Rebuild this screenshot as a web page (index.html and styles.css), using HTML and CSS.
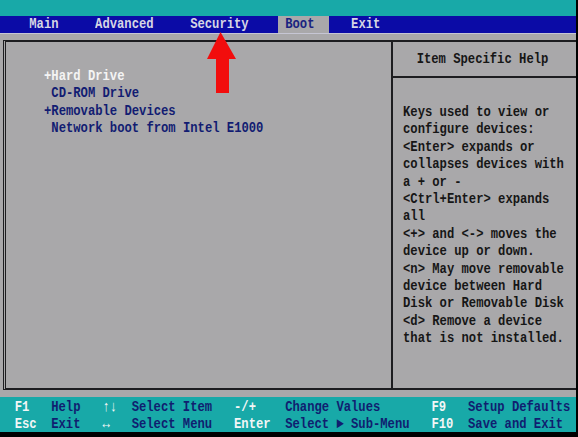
FILE: index.html
```html
<!DOCTYPE html>
<html lang="en">
<head>
    <meta charset="UTF-8">
    <title>BIOS Setup Utility - Boot</title>
    <link rel="stylesheet" href="styles.css">
</head>
<body>
    <div class="screen">
        <div class="topbar"></div>
        <!--menu bar-->
        <nav class="menu">
            <span class="tab"><span class="txt">Main</span></span>
            <span class="tab"><span class="txt">Advanced</span></span>
            <span class="tab"><span class="txt">Security</span></span>
            <span class="tab tab-active"><span class="txt">Boot</span></span>
            <span class="tab"><span class="txt">Exit</span></span>
        </nav>
        <main class="body">
            <div class="panel">
                <section class="boot-list">
                    <p class="boot-item boot-sel">+Hard Drive</p>
                    <p class="boot-item"> CD-ROM Drive</p>
                    <p class="boot-item">+Removable Devices</p>
                    <p class="boot-item"> Network boot from Intel E1000</p>
                </section>
                <aside class="help">
                    <h2 class="help-title"><span class="txt">Item Specific Help</span></h2>
                    <div class="help-text">
                        <p>Keys used to view or</p>
                        <p>configure devices:</p>
                        <p>&lt;Enter&gt; expands or</p>
                        <p>collapses devices with</p>
                        <p>a + or -</p>
                        <p>&lt;Ctrl+Enter&gt; expands</p>
                        <p>all</p>
                        <p>&lt;+&gt; and &lt;-&gt; moves the</p>
                        <p>device up or down.</p>
                        <p>&lt;n&gt; May move removable</p>
                        <p>device between Hard</p>
                        <p>Disk or Removable Disk</p>
                        <p>&lt;d&gt; Remove a device</p>
                        <p>that is not installed.</p>
                    </div>
                </aside>
            </div>
        </main>
        <!--key legend-->
        <footer class="keys">
            <span class="key">F1</span><span class="desc">Help</span>
            <span class="key">&uarr;&darr;</span><span class="desc">Select Item</span>
            <span class="key">-/+</span><span class="desc">Change Values</span>
            <span class="key">F9</span><span class="desc">Setup Defaults</span>
            <span class="key">Esc</span><span class="desc">Exit</span>
            <span class="key">&harr;</span><span class="desc">Select Menu</span>
            <span class="key">Enter</span><span class="desc">Select &#9658; Sub-Menu</span>
            <span class="key">F10</span><span class="desc">Save and Exit</span>
        </footer>
        <svg class="arrow" width="32" height="64" viewBox="0 0 32 64">
            <polygon points="14.5,1 1,28 10,28 10,62 23,62 23,28 30,28" fill="#f20d0d"/>
        </svg>
    </div>
</body>
</html>
```

FILE: styles.css
```css
*{
    margin:0;
    padding:0;
    box-sizing: border-box;
}
body{
    background:#000;
    font-family: "Liberation Mono", "DejaVu Sans Mono", monospace;
    font-size: 12.2px;
    font-weight: bold;
    line-height: 17.4px;
}
.screen{
    position: relative;
    width:576px;
    height:432px;
    display: flex;
    flex-direction: column;
    background:#a9a8aa;
    overflow: hidden;
}
/* bios font is taller than it is wide */
.txt,.boot-item,.help-text p,.key,.desc{
    display:inline-block;
    transform: scaleY(1.22);
}
.boot-item,.help-text p{
    display:block;
}
.topbar{
    flex:0 0 16px;
    background:#18a9a8;
}
.menu{
    flex:0 0 18px;
    display: flex;
    gap:3ch;
    padding-left:3ch;
    background:#0b0ba6;
    border-bottom:1px solid #c6c6d4;
    color:#d6d6e4;
    line-height:17px;
}
.tab{
    padding:0 1ch;
}
.tab-active{
    background:#a9a8aa;
    color:#1a2380;
    padding-right:2ch;
    margin-right:-1ch;
}
.body{
    flex:0 0 363px;
    padding:6px 0 7px 3px;
}
.panel{
    height:100%;
    display: flex;
    border-top:2px solid #1d1d20;
    border-bottom:2px solid #1d1d20;
    border-left:3px double #1d1d20;
}
.boot-list{
    flex:0 0 385px;
    padding:26px 0 0 38px;
}
.boot-item{
    white-space: pre;
    color:#121c72;
}
.boot-sel{
    color:#f4f4f4;
}
.help{
    flex:1;
    border-left:2px solid #1d1d20;
    color:#161616;
}
.help-title{
    height:36px;
    line-height:34px;
    border-bottom:2px solid #1d1d20;
    font-size:inherit;
    text-align:center;
    padding-right:4px;
}
.help-text{
    padding:26px 0 0 10px;
}
.help-text p{
    white-space: pre;
}
.keys{
    flex:0 0 35px;
    display: grid;
    grid-template-columns: 5ch 7ch 4ch 14ch 7ch 20ch 5ch auto;
    padding:2px 0 0 2ch;
    background:#18a9a8;
    line-height:16px;
}
.key{
    color:#f2f6f6;
}
.desc{
    color:#101e70;
    white-space: pre;
}
.arrow{
    position:absolute;
    left:206px;
    top:31px;
}
```
